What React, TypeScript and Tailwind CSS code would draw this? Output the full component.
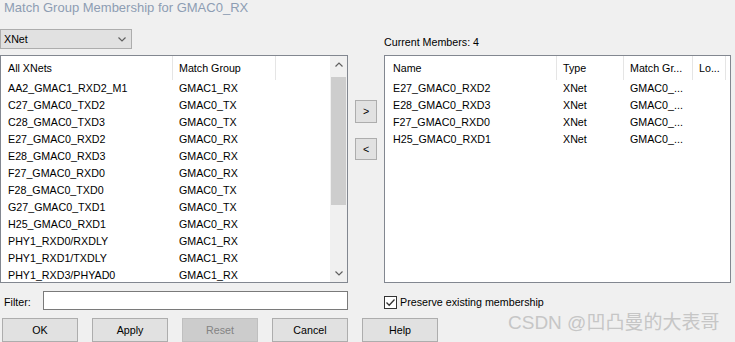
const leftRows = [
  ['AA2_GMAC1_RXD2_M1', 'GMAC1_RX'],
  ['C27_GMAC0_TXD2', 'GMAC0_TX'],
  ['C28_GMAC0_TXD3', 'GMAC0_TX'],
  ['E27_GMAC0_RXD2', 'GMAC0_RX'],
  ['E28_GMAC0_RXD3', 'GMAC0_RX'],
  ['F27_GMAC0_RXD0', 'GMAC0_RX'],
  ['F28_GMAC0_TXD0', 'GMAC0_TX'],
  ['G27_GMAC0_TXD1', 'GMAC0_TX'],
  ['H25_GMAC0_RXD1', 'GMAC0_RX'],
  ['PHY1_RXD0/RXDLY', 'GMAC1_RX'],
  ['PHY1_RXD1/TXDLY', 'GMAC1_RX'],
  ['PHY1_RXD3/PHYAD0', 'GMAC1_RX'],
]

const members = [
  ['E27_GMAC0_RXD2', 'XNet', 'GMAC0_...'],
  ['E28_GMAC0_RXD3', 'XNet', 'GMAC0_...'],
  ['F27_GMAC0_RXD0', 'XNet', 'GMAC0_...'],
  ['H25_GMAC0_RXD1', 'XNet', 'GMAC0_...'],
]

function Chevron({ up = false }: { up?: boolean }) {
  return (
    <svg width="8" height="5" viewBox="0 0 8 5" className={up ? 'rotate-180' : ''}>
      <path d="M0.5 0.5 L4 4 L7.5 0.5" fill="none" stroke="#606060" strokeWidth="1.2" />
    </svg>
  )
}

function Button({ label, disabled = false }: { label: string; disabled?: boolean }) {
  return (
    <div
      className={
        disabled
          ? 'w-[76px] h-[24px] flex items-center justify-center border border-[#bfbfbf] bg-[#cccccc] text-[#838383]'
          : 'w-[76px] h-[24px] flex items-center justify-center border border-[#adadad] bg-[#e1e1e1]'
      }
    >
      {label}
    </div>
  )
}

export default function App() {
  return (
    <div className="relative w-[735px] h-[342px] overflow-hidden bg-[#f0f0f0] font-['Liberation_Sans',Arial,sans-serif] text-[10.7px] text-black">
      {/* title */}
      <div className="h-[29px] pl-[4px] text-[13px] leading-[15px] text-[#8d9db3]">
        Match Group Membership for GMAC0_RX
      </div>

      {/* dropdown + current members */}
      <div className="flex h-[26px]">
        <div className="w-[384px]">
          <div className="w-[132px] h-[20px] flex items-center justify-between pl-[3px] pr-[5px] border border-[#adadad] bg-[#e1e1e1]">
            <span>XNet</span>
            <Chevron />
          </div>
        </div>
        <div className="pt-[5px]">Current Members: 4</div>
      </div>

      {/* lists */}
      <div className="flex h-[228px]">
        <div className="w-[348px] flex border border-[#828790] bg-white">
          <div className="flex-1 overflow-hidden">
            <div className="flex h-[24px] items-center">
              <div className="w-[172px] h-full flex items-center pl-[7px] border-r border-[#e5e5e5]">All XNets</div>
              <div className="w-[103px] h-full flex items-center pl-[6px] border-r border-[#e5e5e5]">Match Group</div>
            </div>
            {leftRows.map(([net, group]) => (
              <div key={net} className="flex h-[17px] leading-[17px]">
                <div className="w-[172px] pl-[7px] whitespace-nowrap">{net}</div>
                <div className="w-[103px] pl-[6px] whitespace-nowrap">{group}</div>
              </div>
            ))}
          </div>
          <div className="w-[17px] flex flex-col bg-[#f0f0f0]">
            <div className="h-[17px] flex items-center justify-center">
              <Chevron up />
            </div>
            <div className="flex-1 pt-[4px] px-[1px]">
              <div className="h-[128px] bg-[#cdcdcd]" />
            </div>
            <div className="h-[17px] flex items-center justify-center">
              <Chevron />
            </div>
          </div>
        </div>

        <div className="w-[36px] flex flex-col items-center pt-[45px] gap-[15px]">
          <div className="w-[22px] h-[23px] flex items-center justify-center border border-[#adadad] bg-[#e1e1e1]">&gt;</div>
          <div className="w-[22px] h-[22px] flex items-center justify-center border border-[#adadad] bg-[#e1e1e1]">&lt;</div>
        </div>

        <div className="w-[347px] border border-[#828790] bg-white overflow-hidden">
          <div className="flex h-[24px]">
            <div className="w-[172px] flex items-center pl-[8px] border-r border-[#e5e5e5]">Name</div>
            <div className="w-[67px] flex items-center pl-[6px] border-r border-[#e5e5e5]">Type</div>
            <div className="w-[69px] flex items-center pl-[6px] border-r border-[#e5e5e5]">Match Gr...</div>
            <div className="w-[33px] flex items-center pl-[6px] border-r border-[#e5e5e5]">Lo...</div>
          </div>
          {members.map(([name, type, group]) => (
            <div key={name} className="flex h-[17px] leading-[17px]">
              <div className="w-[172px] pl-[8px]">{name}</div>
              <div className="w-[67px] pl-[6px]">{type}</div>
              <div className="w-[69px] pl-[6px]">{group}</div>
            </div>
          ))}
        </div>
      </div>

      {/* filter + preserve */}
      <div className="flex h-[19px] mt-[8px]">
        <div className="w-[384px] flex items-center">
          <span className="w-[43px] pl-[4px] pt-[4px]">Filter:</span>
          <div className="w-[305px] h-[19px] border border-[#7a7a7a] bg-white" />
        </div>
        <div className="flex items-center gap-[3px] pt-[3px]">
          <div className="w-[13px] h-[13px] border border-[#333333] bg-white flex items-center justify-center">
            <svg width="11" height="11" viewBox="0 0 11 11">
              <path d="M1.5 5.5 L4.2 8.3 L9.5 2.5" fill="none" stroke="#333333" strokeWidth="1.3" />
            </svg>
          </div>
          <span>Preserve existing membership</span>
        </div>
      </div>

      {/* buttons */}
      <div className="flex gap-[14px] pl-[2px] mt-[8px]">
        <Button label="OK" />
        <Button label="Apply" />
        <Button label="Reset" disabled />
        <Button label="Cancel" />
        <Button label="Help" />
      </div>

      <div className="absolute left-[508px] top-[311px] text-[19px] leading-[24px] text-[#c6c6c6] font-['Liberation_Sans','Noto_Sans_CJK_SC',sans-serif] whitespace-nowrap">
        CSDN @凹凸曼的大表哥
      </div>
    </div>
  )
}
